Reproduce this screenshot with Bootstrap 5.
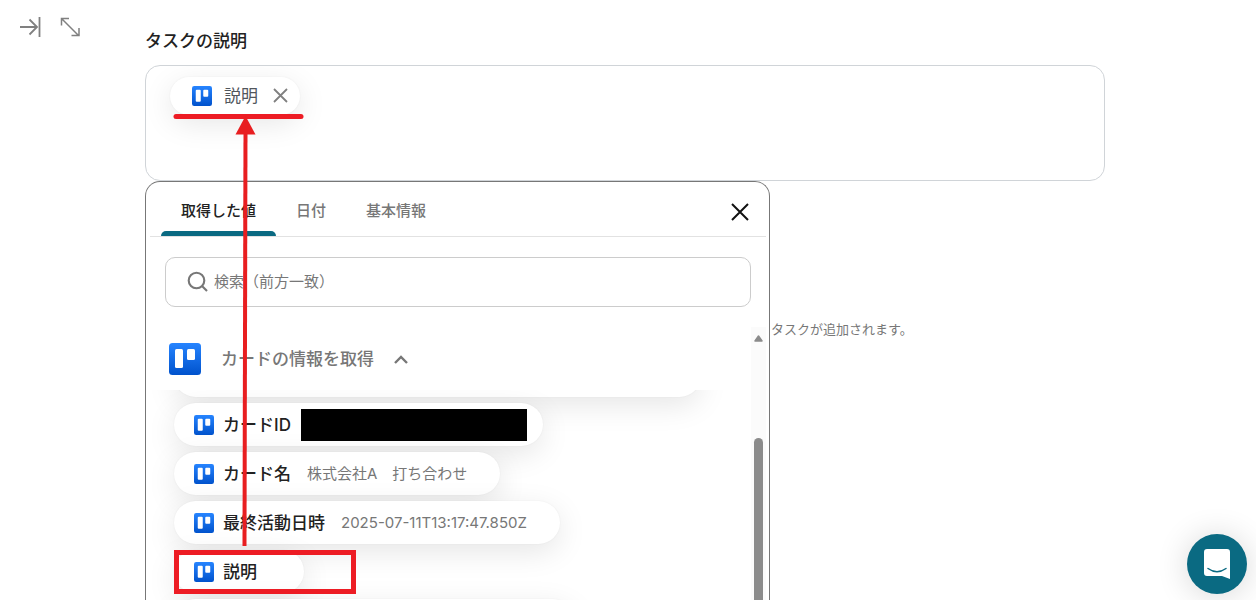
<!DOCTYPE html>
<html lang="ja">
<head>
<meta charset="utf-8">
<meta name="viewport" content="width=device-width, initial-scale=1">
<title>タスクの説明</title>
<link href="https://cdn.jsdelivr.net/npm/bootstrap@5.3.0/dist/css/bootstrap.min.css" rel="stylesheet">
<style>
  body { font-family: Inter, "Noto Sans CJK JP", sans-serif; color: #222; font-size: 15px; line-height: 24px; }
  .fs-17 { font-size: 17px; }
  .field-title { font-weight: 500; line-height: 24px; margin-bottom: 12px; }
  .icon-button { line-height: 0; color: #808080; }
  .tools { width: 145px; padding: 16px 0 0 19px; gap: 18px; }
  .form-area { padding: 29px 151px 0 0; }
  .token-field { height: 116px; border: 1px solid #d0d4d8; border-radius: 15px; padding: 11px 24px; overflow: hidden; }
  .chip { background: #fff; border-radius: 24px; box-shadow: 0 8px 30px rgba(0, 0, 0, .1), 0 0 2px rgba(0, 0, 0, .06); }
  .field-chip { height: 38px; padding: 0 8px 0 22px; color: #51565c; }
  .field-chip .icon-button { margin-left: 10px; }
  .hint { margin-top: 136px; font-size: 13px; color: #777; padding-left: 626px; white-space: nowrap; }
  .picker-anchor { height: 0; }
  .picker { width: 625px; top: 181px; bottom: 0; background: #fff; border: 1px solid #777; border-bottom: 0; border-radius: 15px 15px 0 0; overflow: hidden; }
  .picker-head { margin: 0 3px 0 4px; padding: 0 17px 0 11px; height: 55px; border-bottom: 1px solid #e2e2e2; }
  .tab-link { border: 0; background: none; padding: 4px 20px 0; height: 54px; color: #777; font-weight: 500; position: relative; }
  .tab-link.active { color: #222; }
  .tab-link.active::after { content: ""; position: absolute; left: 0; right: 0; bottom: 0; height: 5px; background: #0a6a82; border-radius: 5px 5px 0 0; }
  .search-box { margin: 20px 18px 0 19px; height: 50px; padding: 0 21px; border: 1px solid #ccc; border-radius: 10px; color: #777; gap: 5px; }
  .search-box input { border: 0; outline: 0; background: none; color: #555; padding: 0; }
  .search-box input::placeholder { color: #777; opacity: 1; }
  .group-head { margin-top: 21px; height: 62px; padding: 0 23px; color: #777; font-weight: 500; gap: 20px; }
  .value-list { padding-left: 28px; overflow: hidden; }
  .value-stack { margin-top: -36px; gap: 6px; }
  .value-chip { height: 43px; flex: none; border: 0; padding: 0 33px 0 20px; gap: 9px; text-align: left; color: #222; }
  .value-chip strong { font-weight: 500; font-size: 17px; }
  .value-chip span { color: #777; margin-left: 7px; }
  .value-chip.long-value { width: 527px; }
  .value-chip.next-value { width: 400px; }
  .value-chip.short-value { padding-right: 47px; }
  .value-chip.id-value { padding-right: 16px; }
  .value-chip .masked { width: 226px; height: 32px; background: #000; margin-left: 1px; }
  .scroll-track { width: 15px; margin: 20px 3px 0 0; background: #fbfbfb; padding: 8px 3px 0; gap: 96px; }
  .scroll-thumb { width: 9px; background: #8b8b8b; border-radius: 5px 5px 0 0; }
  .marks { left: 0; top: 0; pointer-events: none; }
  .chat-button { right: 9px; bottom: 6px; width: 60px; height: 60px; background: #0a6a82; box-shadow: 0 2px 32px rgba(0, 0, 0, .16); line-height: 0; }
</style>
</head>
<body class="bg-white">
<svg class="position-absolute" width="0" height="0" aria-hidden="true">
  <defs>
    <linearGradient id="blue" x1="0" y1="0" x2="0" y2="1"><stop offset="0" stop-color="#2684ff"/><stop offset="1" stop-color="#0052cc"/></linearGradient>
  </defs>
  <symbol id="board" viewBox="0 0 32 32">
    <rect width="32" height="32" rx="3.5" fill="url(#blue)"/>
    <rect x="6" y="6" width="8" height="19" rx="1.5" fill="#fff"/>
    <rect x="18" y="6" width="8" height="11" rx="1.5" fill="#fff"/>
  </symbol>
</svg>

<div class="d-flex vh-100 position-relative overflow-hidden">
  <aside class="tools d-flex align-items-start flex-shrink-0">
    <button class="icon-button border-0 bg-transparent p-0" aria-label="閉じる">
      <svg width="22" height="22" viewBox="0 0 22 22" fill="none" stroke="currentColor" stroke-width="1.8"><path d="M1 11H18M10.500 3.500l7.500 7.500-7.500 7.500M20.500 1v20"/></svg>
    </button>
    <button class="icon-button border-0 bg-transparent p-0" aria-label="拡大">
      <svg width="22" height="22" viewBox="0 0 22 22" fill="none" stroke="currentColor" stroke-width="1.5"><path d="M2.500 2.500l17 17M2.500 9.500V2.500H10M12.500 19.500H20V12"/></svg>
    </button>
  </aside>

  <main class="form-area flex-grow-1 position-relative">
    <h1 class="field-title fs-17">タスクの説明</h1>
    <div class="token-field">
      <div class="chip field-chip fs-17 d-inline-flex align-items-center">
        <svg width="20" height="20" class="me-2"><use href="#board"/></svg>
        <span class="ms-1">説明</span>
        <button class="icon-button border-0 bg-transparent p-0" aria-label="削除">
          <svg width="24" height="20" viewBox="0 0 24 20" fill="none" stroke="currentColor" stroke-width="1.8"><path d="M6 3L19 16M19 3L6 16"/></svg>
        </button>
      </div>
    </div>
    <p class="hint mb-0">タスクが追加されます。</p>

    <section class="picker position-absolute d-flex flex-column" aria-label="値の選択">
      <div class="picker-head d-flex align-items-start flex-shrink-0" role="tablist">
        <button class="tab-link active" role="tab">取得した値</button>
        <button class="tab-link" role="tab">日付</button>
        <button class="tab-link" role="tab">基本情報</button>
        <button class="ms-auto mt-3 border-0 bg-transparent p-0 lh-1" aria-label="閉じる">
          <svg width="18" height="28" viewBox="0 0 18 28" fill="none" stroke="#111" stroke-width="2"><path d="M1 6l16 16M17 6L1 22"/></svg>
        </button>
      </div>
      <label class="search-box d-flex align-items-center flex-shrink-0">
        <svg width="22" height="22" viewBox="0 0 22 22" fill="none" stroke="#777" stroke-width="2.1"><circle cx="9.500" cy="9.500" r="7.800"/><path d="M15 15l5 5"/></svg>
        <input class="flex-grow-1" type="text" placeholder="検索（前方一致）" aria-label="検索">
      </label>
      <div class="d-flex flex-grow-1">
        <div class="flex-grow-1 d-flex flex-column">
          <div class="group-head fs-17 d-flex align-items-center flex-shrink-0">
            <svg width="32" height="32"><use href="#board"/></svg>
            <span>カードの情報を取得</span>
            <svg width="14" height="10" viewBox="0 0 14 10" fill="none" stroke="#777" stroke-width="2.4"><path d="M1 9l6-6 6 6"/></svg>
          </div>
          <div class="value-list flex-grow-1">
            <div class="value-stack d-flex flex-column align-items-start">
              <button class="chip value-chip long-value" aria-label="値"></button>
              <button class="chip value-chip id-value d-flex align-items-center"><svg width="20" height="20"><use href="#board"/></svg><strong>カードID</strong><span class="masked"></span></button>
              <button class="chip value-chip d-flex align-items-center"><svg width="20" height="20"><use href="#board"/></svg><strong>カード名</strong><span>株式会社A　打ち合わせ</span></button>
              <button class="chip value-chip d-flex align-items-center"><svg width="20" height="20"><use href="#board"/></svg><strong>最終活動日時</strong><span>2025-07-11T13:17:47.850Z</span></button>
              <button class="chip value-chip short-value d-flex align-items-center"><svg width="20" height="20"><use href="#board"/></svg><strong>説明</strong></button>
              <button class="chip value-chip next-value" aria-label="値"></button>
            </div>
          </div>
        </div>
        <div class="scroll-track d-flex flex-column">
          <svg width="9" height="7" viewBox="0 0 9 7"><path d="M4.500 1L8 6H1z" fill="#8b8b8b" stroke="#8b8b8b" stroke-width="1.5" stroke-linejoin="round"/></svg>
          <div class="scroll-thumb flex-grow-1"></div>
        </div>
      </div>
    </section>
  </main>

  <svg class="marks position-absolute" width="400" height="600" fill="none" stroke="#ed1c24" aria-hidden="true">
    <path d="M176 116.500H301" stroke-width="5" stroke-linecap="round"/>
    <path d="M245.500 130L244.500 546" stroke="#e81e20" stroke-width="4"/>
    <path d="M245.500 116L255.500 134.500H235.500z" fill="#e81e20" stroke="none"/>
    <rect x="176.500" y="552.500" width="177" height="39" stroke-width="5"/>
  </svg>

  <button class="chat-button position-absolute rounded-circle border-0 p-0" aria-label="チャット">
    <svg width="28" height="32" viewBox="0 0 28 32"><path d="M4 1H24Q27 1 27 4V31L19 28H4Q1 28 1 25V4Q1 1 4 1Z" fill="#fff"/><path d="M5 20.500Q14 27 23 20.500" fill="none" stroke="#0a6a82" stroke-width="1.5" stroke-linecap="round"/></svg>
  </button>
</div>
<script src="https://cdn.jsdelivr.net/npm/bootstrap@5.3.0/dist/js/bootstrap.bundle.min.js"></script>
</body>
</html>
